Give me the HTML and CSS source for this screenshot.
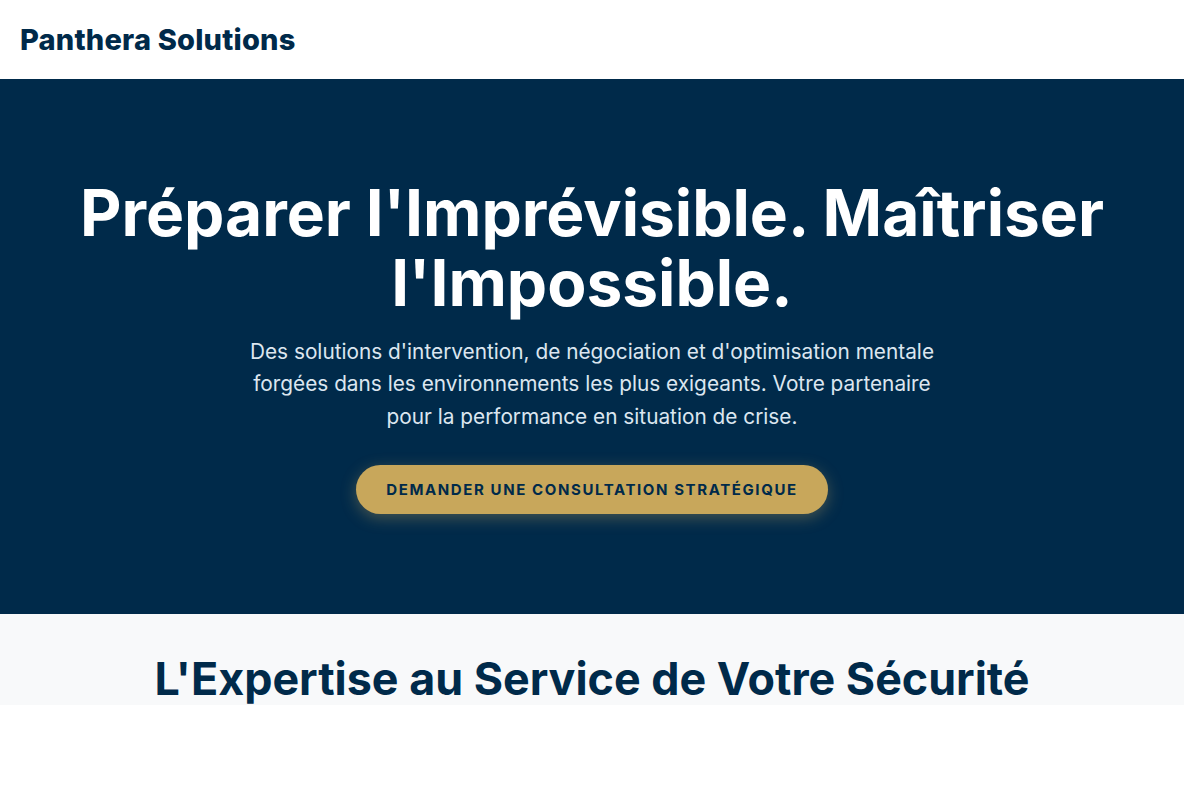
FILE: index.html
```html
<!DOCTYPE html>
<html lang="fr">
<head>
<meta charset="utf-8">
<title>Panthera Solutions</title>
<link rel="stylesheet" href="styles.css">
</head>
<body>
<div class="page">
  <header class="site-header">
    <div class="logo">Panthera Solutions</div>
  </header>
  <section class="hero">
    <h1 class="hero-title">Préparer l'Imprévisible. Maîtriser l'Impossible.</h1>
    <p class="hero-text">Des solutions d'intervention, de négociation et d'optimisation mentale forgées dans les environnements les plus exigeants. Votre partenaire pour la performance en situation de crise.</p>
    <a class="cta" href="#">Demander une consultation stratégique</a>
  </section>
  <section class="expertise">
    <h2 class="section-title">L'Expertise au Service de Votre Sécurité</h2>
  </section>
</div>
</body>
</html>
```

FILE: styles.css
```css
* { box-sizing: border-box; }
html, body { margin: 0; padding: 0; background: #ffffff; }
body { font-family: Inter, "Noto Sans", sans-serif; }
.page {
  width: 1184px;
  height: 705px;
  overflow: hidden;
}
.site-header {
  height: 79px;
  display: flex;
  align-items: center;
  padding: 0 20px;
  background: #ffffff;
}
.logo {
  font-size: 29px;
  font-weight: 800;
  color: #002a4a;
  letter-spacing: 0.2px;
}
.hero {
  background: #002a4a;
  height: 535px;
  display: flex;
  flex-direction: column;
  align-items: center;
  padding: 99px 20px 0;
  text-align: center;
}
.hero-title {
  margin: 0 0 17px;
  font-size: 64px;
  font-weight: 700;
  line-height: 1.1;
  color: #ffffff;
  max-width: 1100px;
}
.hero-text {
  margin: 0 0 32px;
  max-width: 700px;
  font-size: 20.8px;
  line-height: 1.56;
  color: #dce6f0;
}
.cta {
  display: inline-block;
  background: #c8a75b;
  color: #002a4a;
  text-decoration: none;
  text-transform: uppercase;
  font-size: 15px;
  font-weight: 700;
  letter-spacing: 1.6px;
  padding: 15px 30px;
  border-radius: 50px;
  box-shadow: 0 4px 15px rgba(200, 167, 91, 0.35);
}
.expertise {
  background: #f8f9fa;
  padding: 39px 20px 0;
  height: 200px;
  text-align: center;
}
.section-title {
  margin: 0;
  font-size: 44.8px;
  font-weight: 700;
  line-height: 1.2;
  color: #002a4a;
}
```
